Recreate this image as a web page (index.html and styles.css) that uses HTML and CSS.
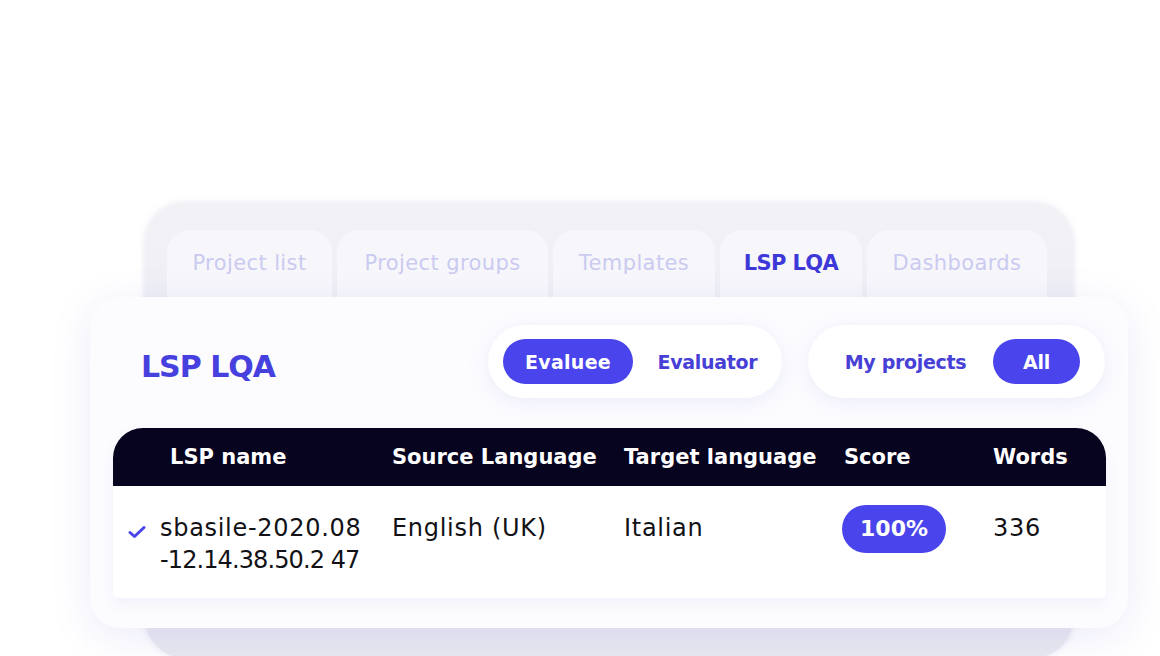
FILE: index.html
```html
<!DOCTYPE html>
<html lang="en">
<head>
<meta charset="utf-8">
<title>LSP LQA</title>
<link rel="stylesheet" href="styles.css">
</head>
<body>
<div class="stage">
  <div class="back-panel">
    <nav class="tabs">
      <div class="tab t1">Project list</div>
      <div class="tab t2">Project groups</div>
      <div class="tab t3">Templates</div>
      <div class="tab t4 active">LSP LQA</div>
      <div class="tab t5">Dashboards</div>
    </nav>
  </div>
  <section class="card">
    <div class="top-row">
      <h1 class="title">LSP LQA</h1>
      <div class="toggle toggle-a">
        <span class="opt opt-evaluee on">Evaluee</span>
        <span class="opt opt-evaluator">Evaluator</span>
      </div>
      <div class="toggle toggle-b">
        <span class="opt opt-mine">My projects</span>
        <span class="opt opt-all on">All</span>
      </div>
    </div>
    <div class="table">
      <div class="thead">
        <span class="cell c0"></span>
        <span class="cell">LSP name</span>
        <span class="cell">Source Language</span>
        <span class="cell">Target language</span>
        <span class="cell">Score</span>
        <span class="cell">Words</span>
      </div>
      <div class="trow">
        <span class="cell c0">
          <svg class="check" viewBox="0 0 18 14" width="18" height="14"><path d="M2 7.5 L6.5 11.5 L16 2.5" fill="none" stroke="#4a44e8" stroke-width="3" stroke-linecap="round" stroke-linejoin="round"/></svg>
        </span>
        <span class="cell name">sbasile-2020.08<br><span class="id-tail">-12.14.38.50.2 47</span></span>
        <span class="cell">English (UK)</span>
        <span class="cell">Italian</span>
        <span class="cell"><span class="score">100%</span></span>
        <span class="cell">336</span>
      </div>
    </div>
  </section>
</div>
</body>
</html>
```
FILE: styles.css
```css
* { box-sizing: border-box; }
html, body { margin: 0; padding: 0; }
body {
  width: 1160px;
  height: 656px;
  overflow: hidden;
  background: #ffffff;
  font-family: "DejaVu Sans", "Noto Sans", sans-serif;
  color: #111118;
}
.stage {
  display: grid;
  grid-template-columns: 55px 928px 55px;
  grid-template-rows: 94px 331px 30px;
  margin: 203px 0 0 90px;
}
.back-panel {
  grid-column: 2;
  grid-row: 1 / 4;
  background: linear-gradient(#f1f1f6, #e8e8f0);
  border-radius: 40px;
  box-shadow: 0 0 6px rgba(200, 200, 225, 0.5);
}
.tabs {
  display: flex;
  gap: 5px;
  padding: 27px 0 0 22px;
}
.tab {
  height: 70px;
  background: #f7f7fb;
  border-radius: 22px 22px 0 0;
  display: flex;
  justify-content: center;
  padding-top: 21px;
  font-size: 21px;
  font-weight: 500;
  color: #cbcaf1;
  letter-spacing: 0.4px;
}
.t1 { width: 165px; }
.t2 { width: 211px; }
.t3 { width: 162px; }
.t4 { width: 142px; }
.t5 { width: 180px; }
.tab.active { color: #3e38d8; font-weight: 700; letter-spacing: -0.6px; }

.card {
  grid-column: 1 / 4;
  grid-row: 2;
  position: relative;
  background: #fcfcff;
  border-radius: 30px;
  box-shadow: 0 8px 40px rgba(110, 110, 220, 0.14);
  padding: 28px 22px 0 23px;
}
.top-row {
  display: flex;
  align-items: center;
  height: 73px;
}
.title {
  margin: 0 0 0 28px;
  width: 347px;
  font-size: 30px;
  font-weight: 700;
  color: #4640de;
  letter-spacing: -1px;
  padding-top: 10px;
}
.toggle {
  display: flex;
  align-items: center;
  height: 73px;
  border-radius: 37px;
  background: #ffffff;
  box-shadow: 0 4px 22px rgba(120, 120, 210, 0.13);
  gap: 5px;
}
.toggle-a { width: 294px; padding: 0 0 0 15px; }
.toggle-b { width: 297px; padding: 0 0 0 15px; margin-left: 26px; }
.opt {
  display: flex;
  align-items: center;
  justify-content: center;
  height: 45px;
  border-radius: 23px;
  font-size: 19px;
  font-weight: 600;
  color: #4640d6;
  letter-spacing: -0.3px;
}
.opt.on { background: #4a44ec; color: #ffffff; }
.opt-evaluee { width: 130px; letter-spacing: 0.3px; }
.opt-evaluator { width: 139px; }
.opt-mine { width: 165px; }
.opt-all { width: 87px; }

.table {
  margin-top: 30px;
  border-radius: 30px 30px 4px 4px;
  background: #ffffff;
  box-shadow: 0 6px 14px rgba(120, 120, 200, 0.08);
}
.thead {
  display: grid;
  grid-template-columns: 57px 222px 232px 220px 149px 1fr;
  height: 58px;
  align-items: center;
  background: #07041f;
  border-radius: 30px 30px 0 0;
  color: #ffffff;
  font-size: 21px;
  font-weight: 700;
  letter-spacing: 0;
}
.trow {
  display: grid;
  grid-template-columns: 47px 232px 232px 220px 149px 1fr;
  height: 112px;
  padding-top: 26px;
  font-size: 24px;
  line-height: 32px;
  color: #121216;
  letter-spacing: 0.7px;
}
.id-tail { letter-spacing: -0.9px; }
.c0 { display: flex; justify-content: flex-end; padding-right: 14px; }
.check { margin-top: 13px; }
.score {
  display: inline-flex;
  align-items: center;
  justify-content: center;
  width: 104px;
  height: 48px;
  margin: -9px 0 0 -2px;
  border-radius: 24px;
  background: #4a44ec;
  color: #ffffff;
  font-weight: 700;
  font-size: 22px;
  letter-spacing: 0;
}
```
